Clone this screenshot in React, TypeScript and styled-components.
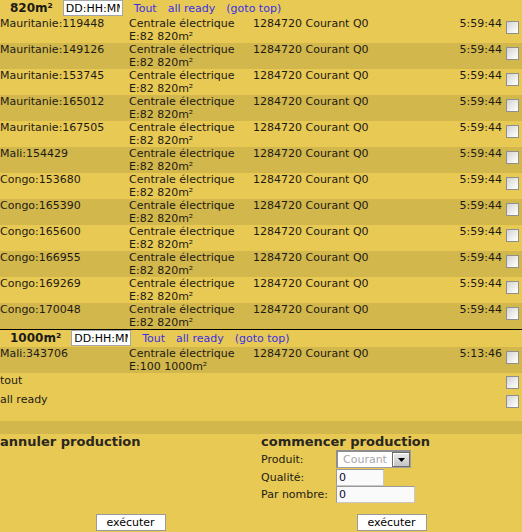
import React from 'react';
import { createGlobalStyle, styled } from 'styled-components';

const light = '#e7c954';
const dark = '#d2b74c';
const ink = '#1e1b14';

const GlobalStyle = createGlobalStyle`
  html, body {
    margin: 0;
    padding: 0;
    background: ${light};
  }
  body {
    font-family: 'DejaVu Sans', Verdana, sans-serif;
    font-size: 11px;
    color: ${ink};
  }
`;

const Page = styled.div`
  display: flex;
  flex-direction: column;
  width: 522px;
`;

const Header = styled.div`
  display: flex;
  align-items: flex-start;
  height: 17px;
  line-height: 17px;
`;

const Title = styled.span`
  font-weight: bold;
  font-size: 12px;
  padding: 0 10px;
`;

const TimeInput = styled.input`
  box-sizing: border-box;
  width: 60px;
  height: 16px;
  margin: 0;
  padding: 0 2px;
  border: 1px solid #a3a6a8;
  background: #fff;
  font: 11px 'DejaVu Sans', Verdana, sans-serif;
  color: #000;
  outline: none;
`;

const Links = styled.div`
  display: flex;
  gap: 11px;
  margin-left: 11px;
`;

const Link = styled.a`
  color: #3b31e4;
  text-decoration: none;
  cursor: pointer;
`;

const Row = styled.div<{ $dark?: boolean }>`
  display: grid;
  grid-template-columns: 129px 124px 1fr auto 20px;
  height: 26px;
  line-height: 13px;
  background: ${(p) => (p.$dark ? dark : light)};
`;

const Cell = styled.div`
  white-space: nowrap;
`;

const Line = styled.span`
  display: block;
`;

const TimeCell = styled.div`
  text-align: right;
`;

const CheckCell = styled.div`
  padding: 4px 0 0 4px;
`;

const Check = styled.input.attrs({ type: 'checkbox' })`
  appearance: none;
  display: block;
  box-sizing: border-box;
  width: 13px;
  height: 13px;
  margin: 0;
  border: 1px solid #8e8f8f;
  background: linear-gradient(135deg, #d2d2d0 0%, #f4f4f2 70%, #fff 100%);
`;

const Divider = styled.div`
  height: 1px;
  background: #000;
`;

const PlainRow = styled.div`
  display: flex;
  justify-content: space-between;
  align-items: flex-start;
  height: 19px;
  line-height: 13px;
`;

const PlainText = styled.span`
  padding-top: 1px;
`;

const PlainCheck = styled.div`
  padding: 3px 3px 0 0;
`;

const Spacer = styled.div<{ $h: number; $dark?: boolean }>`
  height: ${(p) => p.$h}px;
  background: ${(p) => (p.$dark ? dark : 'transparent')};
`;

const Actions = styled.div`
  display: grid;
  grid-template-columns: 261px 261px;
`;

const Panel = styled.div`
  display: flex;
  flex-direction: column;
`;

const PanelTitle = styled.div`
  font-weight: bold;
  font-size: 13px;
  line-height: 16px;
  color: #2a2620;
`;

const Form = styled.div`
  display: grid;
  grid-template-columns: 75px auto;
  grid-template-rows: 19px 17px 17px;
  align-items: center;
`;

const Field = styled.div`
  display: flex;
  align-items: flex-start;
  height: 100%;
`;

const SelectWrap = styled.div`
  position: relative;
  width: 75px;
  height: 18px;
`;

const Select = styled.select`
  appearance: none;
  box-sizing: border-box;
  width: 100%;
  height: 100%;
  margin: 0;
  padding: 0 0 0 5px;
  border: 1px solid #a0a0a0;
  border-top: 2px solid #8e8e8e;
  border-left: 2px solid #8e8e8e;
  border-radius: 0;
  background: #fff;
  color: #a9a9a9;
  font: 11px 'DejaVu Sans', Verdana, sans-serif;
  opacity: 1;
`;

const DropButton = styled.span`
  position: absolute;
  right: 1px;
  top: 2px;
  box-sizing: border-box;
  width: 18px;
  height: 15px;
  border: 1px solid #6c6c6c;
  box-shadow: inset 1px 1px 0 #fff;
  background: linear-gradient(#ececec, #c4c4c4);
  display: flex;
  align-items: center;
  justify-content: center;
`;

const NumberInput = styled.input<{ $w: number }>`
  box-sizing: border-box;
  width: ${(p) => p.$w}px;
  height: 17px;
  margin: 0;
  padding: 0 2px;
  border: 1px solid #c8c8c8;
  border-top-color: #9a9a9a;
  border-left-color: #9a9a9a;
  background: #fafafa;
  color: #0b0b30;
  font: 11px 'DejaVu Sans', Verdana, sans-serif;
  outline: none;
`;

const Button = styled.button<{ $top?: number }>`
  box-sizing: border-box;
  align-self: center;
  width: 70px;
  height: 17px;
  margin-top: ${(p) => (p.$top !== undefined ? `${p.$top}px` : 'auto')};
  padding: 0;
  border: 1px solid #9a9a9a;
  background: #fff;
  color: #000;
  font: 11px 'DejaVu Sans', Verdana, sans-serif;
  line-height: 15px;
`;

type Item = { place: string; building: string; goods: string; time: string };

const rows820: Item[] = [
  '119448', '149126', '153745', '165012', '167505',
].map((id) => ({ place: `Mauritanie:${id}`, building: 'E:82 820m²', goods: '1284720 Courant Q0', time: '5:59:44' }))
  .concat([{ place: 'Mali:154429', building: 'E:82 820m²', goods: '1284720 Courant Q0', time: '5:59:44' }])
  .concat(
    ['153680', '165390', '165600', '166955', '169269', '170048'].map((id) => ({
      place: `Congo:${id}`,
      building: 'E:82 820m²',
      goods: '1284720 Courant Q0',
      time: '5:59:44',
    })),
  );

const rows1000: Item[] = [
  { place: 'Mali:343706', building: 'E:100 1000m²', goods: '1284720 Courant Q0', time: '5:13:46' },
];

const GroupHeader: React.FC<{ size: string }> = ({ size }) => (
  <Header>
    <Title>{size}</Title>
    <TimeInput defaultValue="DD:HH:MM" />
    <Links>
      <Link>Tout</Link>
      <Link>all ready</Link>
      <Link>(goto top)</Link>
    </Links>
  </Header>
);

const ItemRow: React.FC<{ item: Item; dark: boolean }> = ({ item, dark }) => (
  <Row $dark={dark}>
    <Cell>{item.place}</Cell>
    <Cell>
      <Line>Centrale électrique</Line>
      <Line>{item.building}</Line>
    </Cell>
    <Cell>{item.goods}</Cell>
    <TimeCell>{item.time}</TimeCell>
    <CheckCell>
      <Check />
    </CheckCell>
  </Row>
);

export default function App() {
  return (
    <Page>
      <GlobalStyle />
      <GroupHeader size="820m²" />
      {rows820.map((item, i) => (
        <ItemRow key={item.place} item={item} dark={i % 2 === 1} />
      ))}
      <Divider />
      <GroupHeader size="1000m²" />
      {rows1000.map((item) => (
        <ItemRow key={item.place} item={item} dark />
      ))}
      <PlainRow>
        <PlainText>tout</PlainText>
        <PlainCheck>
          <Check />
        </PlainCheck>
      </PlainRow>
      <PlainRow>
        <PlainText>all ready</PlainText>
        <PlainCheck>
          <Check />
        </PlainCheck>
      </PlainRow>
      <Spacer $h={10} />
      <Spacer $h={13} $dark />
      <Actions>
        <Panel>
          <PanelTitle>annuler production</PanelTitle>
          <Button>exécuter</Button>
        </Panel>
        <Panel>
          <PanelTitle>commencer production</PanelTitle>
          <Form>
            <span>Produit:</span>
            <Field>
              <SelectWrap>
                <Select disabled defaultValue="courant">
                  <option value="courant">Courant</option>
                </Select>
                <DropButton>
                  <svg width="7" height="4" viewBox="0 0 7 4">
                    <path d="M0 0h7L3.5 4z" fill="#000" />
                  </svg>
                </DropButton>
              </SelectWrap>
            </Field>
            <span>Qualité:</span>
            <Field>
              <NumberInput $w={48} defaultValue="0" />
            </Field>
            <span>Par nombre:</span>
            <Field>
              <NumberInput $w={79} defaultValue="0" />
            </Field>
          </Form>
          <Button $top={11}>exécuter</Button>
        </Panel>
      </Actions>
    </Page>
  );
}
